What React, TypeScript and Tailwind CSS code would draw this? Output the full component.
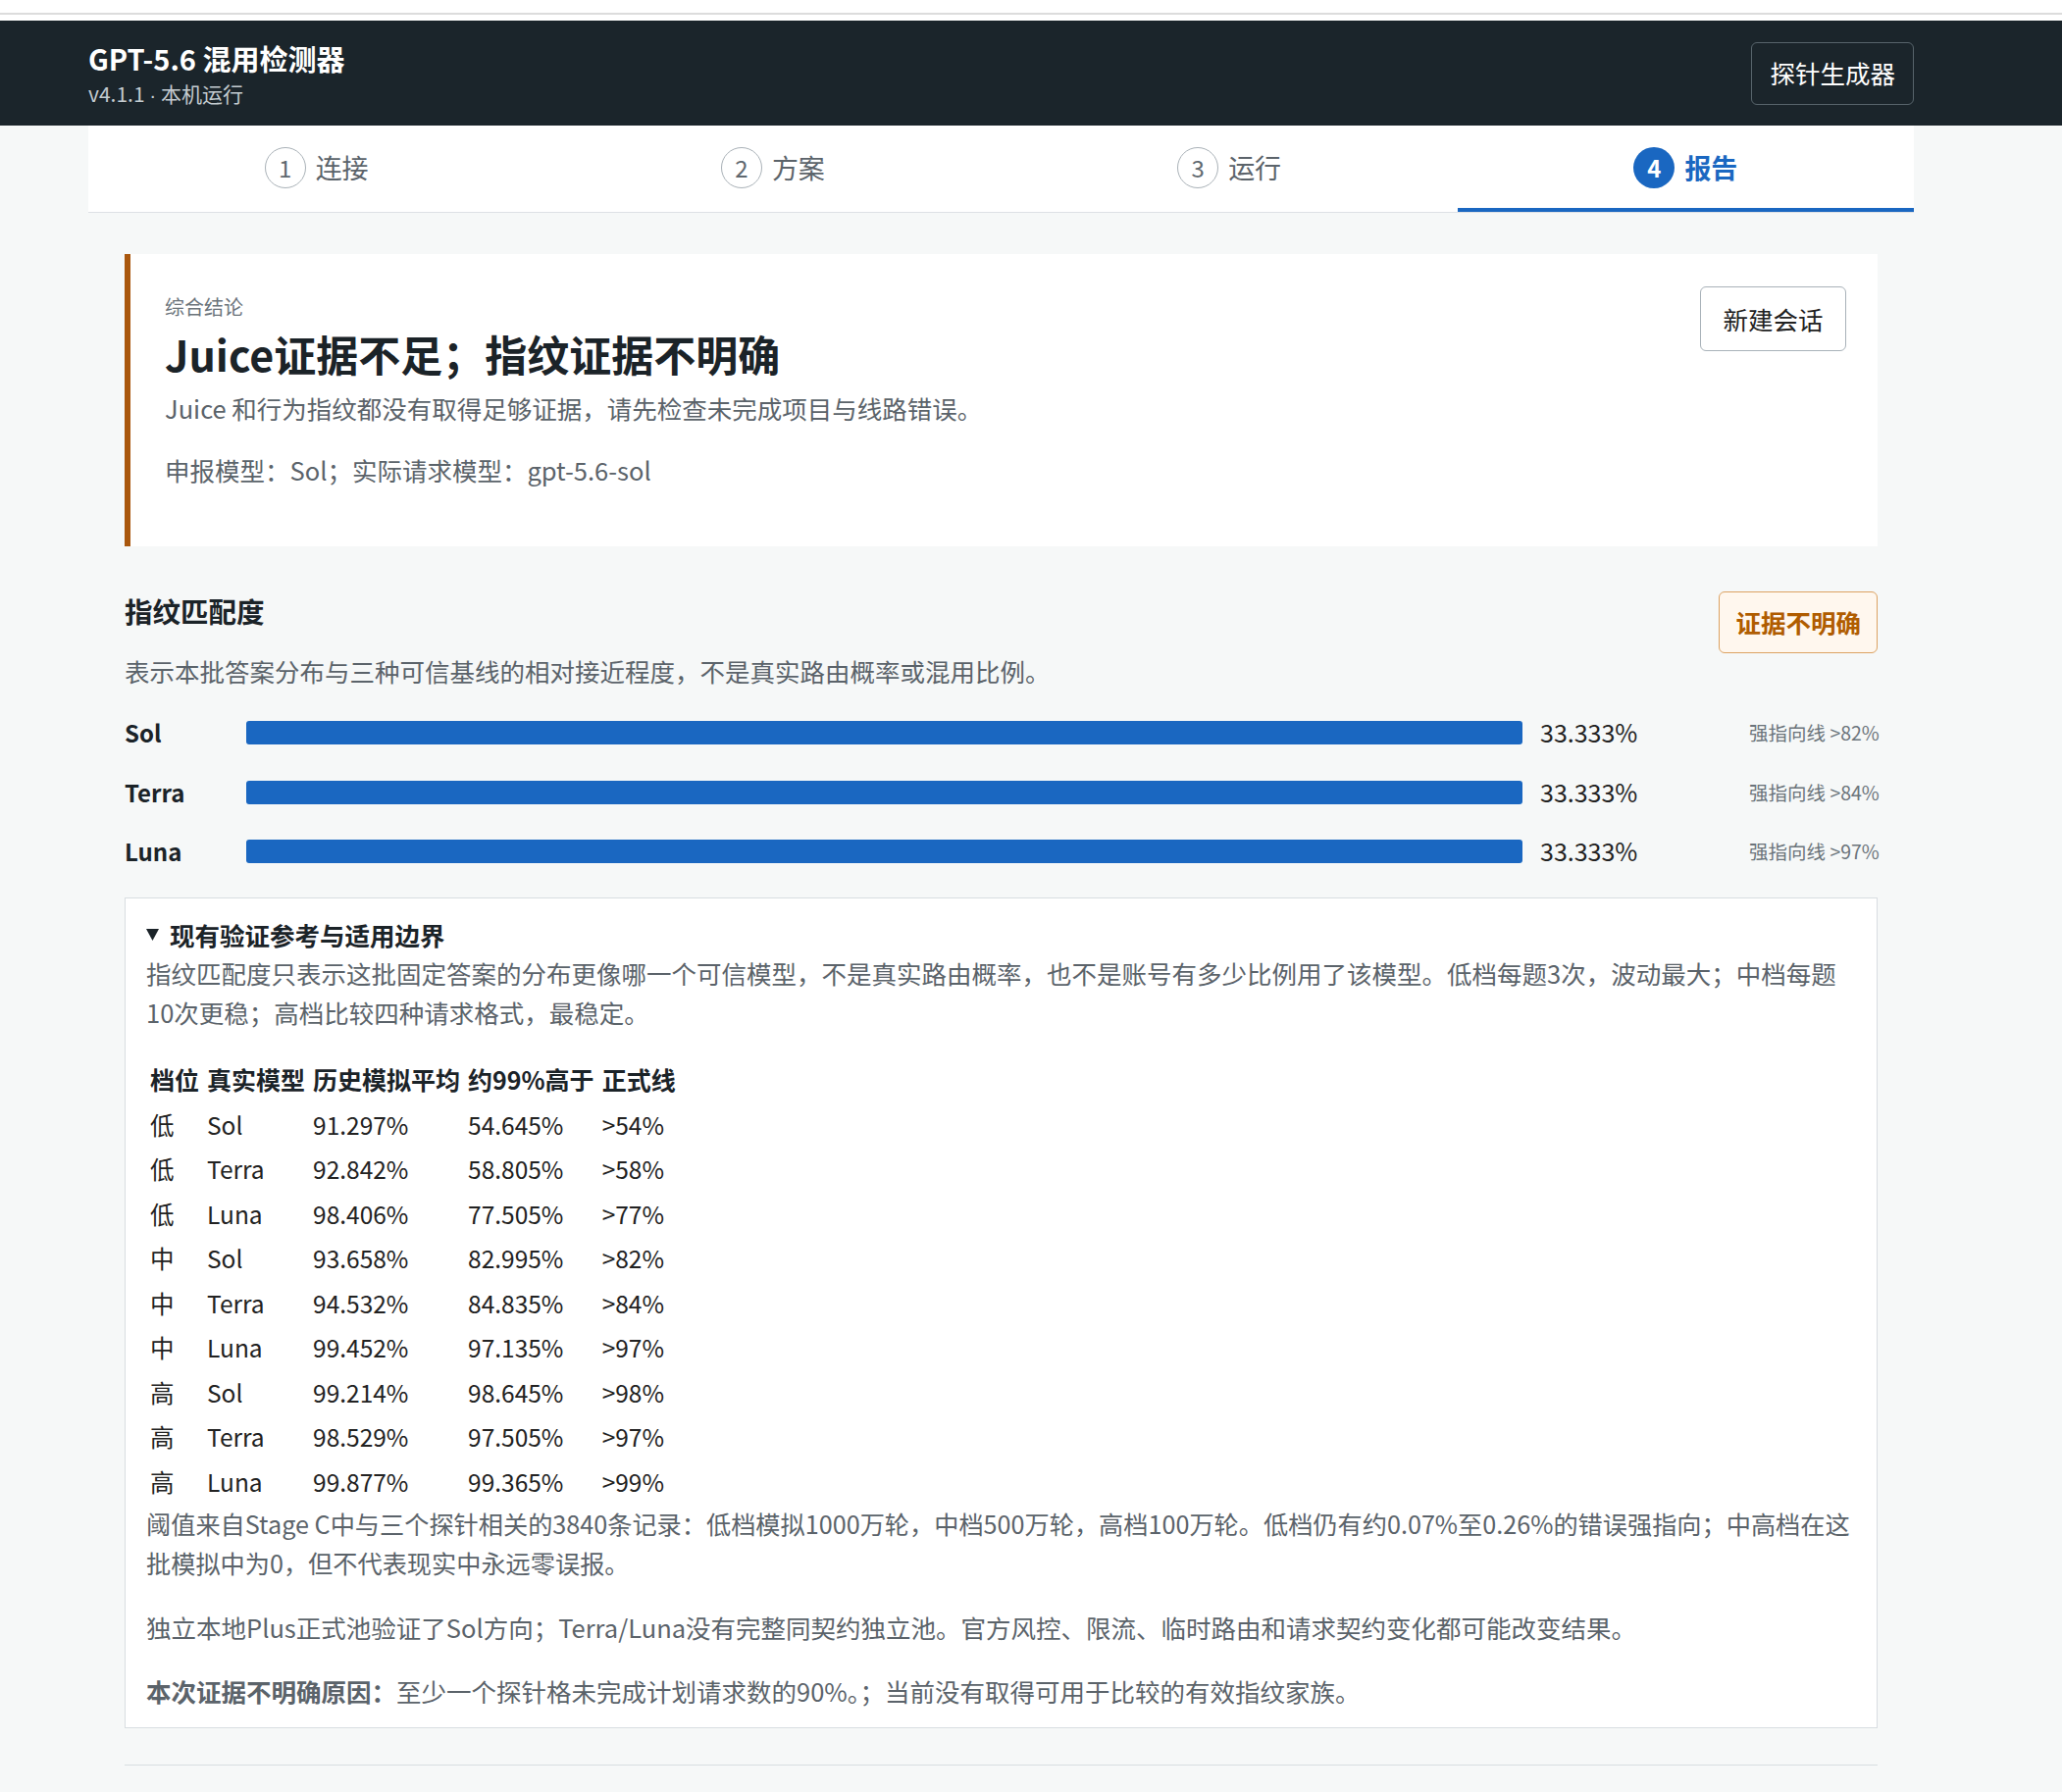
import React from 'react';

const steps = [
  { n: 1, label: '连接' },
  { n: 2, label: '方案' },
  { n: 3, label: '运行' },
  { n: 4, label: '报告' },
];

const matches = [
  { name: 'Sol', pct: 33.333, line: '>82%' },
  { name: 'Terra', pct: 33.333, line: '>84%' },
  { name: 'Luna', pct: 33.333, line: '>97%' },
];

const rows = [
  ['低', 'Sol', '91.297%', '54.645%', '>54%'],
  ['低', 'Terra', '92.842%', '58.805%', '>58%'],
  ['低', 'Luna', '98.406%', '77.505%', '>77%'],
  ['中', 'Sol', '93.658%', '82.995%', '>82%'],
  ['中', 'Terra', '94.532%', '84.835%', '>84%'],
  ['中', 'Luna', '99.452%', '97.135%', '>97%'],
  ['高', 'Sol', '99.214%', '98.645%', '>98%'],
  ['高', 'Terra', '98.529%', '97.505%', '>97%'],
  ['高', 'Luna', '99.877%', '99.365%', '>99%'],
];

const StepTabs: React.FC<{ active: number }> = ({ active }) => (
  <div className="grid grid-cols-4 bg-white border-b border-[#dde1e5]">
    {steps.map((s) => {
      const on = s.n === active;
      return (
        <div key={s.n} className="flex flex-col h-[88px]">
          <div className="flex flex-1 items-center justify-center gap-[10px] pt-[2px]">
            {on ? (
              <span className="flex h-[42px] w-[42px] items-center justify-center rounded-full bg-[#1a67c1] text-[24px] font-bold text-white">
                {s.n}
              </span>
            ) : (
              <span className="flex h-[42px] w-[42px] items-center justify-center rounded-full border border-[#aab2b8] text-[24px] text-[#5f686f]">
                {s.n}
              </span>
            )}
            <span className={on ? 'text-[27px] font-bold text-[#1a67c1]' : 'text-[27px] text-[#5b636a]'}>{s.label}</span>
          </div>
          <div className={on ? 'h-[4px] bg-[#1a67c1]' : 'h-[4px]'} />
        </div>
      );
    })}
  </div>
);

export default function App() {
  return (
    <div className="min-h-[1827px] bg-[#f6f8f8] font-['Noto_Sans_CJK_SC','Noto_Sans',sans-serif] text-[#1b2328]">
      {/* browser strip */}
      <div className="h-[15px] bg-white border-b-2 border-[#dcdcdc]" />
      <div className="h-[6px] bg-white" />

      <header className="h-[107px] bg-[#1b252b]">
        <div className="ml-[90px] flex h-full w-[1861px] items-center justify-between">
          <div className="flex flex-col pt-[3px]">
            <h1 className="text-[29px] font-bold leading-[40px] text-white">GPT-5.6 混用检测器</h1>
            <div className="text-[21px] leading-[32px] text-[#c3cbd0]">
              v4.1.1 <span className="font-['Liberation_Sans',sans-serif]">·</span> 本机运行
            </div>
          </div>
          <button className="h-[64px] rounded-[6px] border border-[#57646b] px-[18px] text-[25.5px] text-white">
            探针生成器
          </button>
        </div>
      </header>

      <div className="ml-[90px] w-[1861px]">
        <StepTabs active={4} />

        <main className="px-[37px] pt-[42px]">
          {/* overall verdict */}
          <section className="flex justify-between border-l-[6px] border-[#a9570d] bg-white pb-[60px] pl-[35px] pr-[32px] pt-[33px]">
            <div className="flex flex-col pt-[7px]">
              <div className="text-[20px] leading-[27px] text-[#6b747b]">综合结论</div>
              <h2 className="mt-[8px] text-[43px] font-bold leading-[52px] text-[#1b2328]">Juice证据不足；指纹证据不明确</h2>
              <p className="mt-[12px] text-[25.5px] leading-[36px] text-[#5b636a]">
                Juice 和行为指纹都没有取得足够证据，请先检查未完成项目与线路错误。
              </p>
              <p className="mt-[27px] text-[25.5px] leading-[36px] text-[#5b636a]">申报模型：Sol；实际请求模型：gpt-5.6-sol</p>
            </div>
            <button className="h-[66px] w-[149px] shrink-0 rounded-[6px] border border-[#a9b2b9] bg-white text-[25.5px] text-[#222]">
              新建会话
            </button>
          </section>

          {/* fingerprint match */}
          <section className="mt-[46px]">
            <div className="flex items-start justify-between">
              <h3 className="text-[28.5px] font-bold leading-[40px]">指纹匹配度</h3>
              <span className="flex h-[63px] items-center rounded-[6px] border border-[#dca262] bg-[#fff7ee] px-[16px] text-[25.5px] font-bold text-[#b05c00]">
                证据不明确
              </span>
            </div>
            <p className="text-[25.5px] leading-[36px] text-[#5b636a]">
              表示本批答案分布与三种可信基线的相对接近程度，不是真实路由概率或混用比例。
            </p>

            <div className="mt-[27px] flex flex-col gap-[24.5px]">
              {matches.map((m) => (
                <div key={m.name} className="flex h-[36px] items-center gap-[18px]">
                  <span className="w-[106px] text-[24px] font-bold text-[#1b2328]">{m.name}</span>
                  <div className="h-[24px] flex-1">
                    <div className="h-full rounded-[3px] bg-[#1a67c1]" style={{ width: `${Math.min(100, (m.pct / 33.333) * 100)}%` }} />
                  </div>
                  <span className="w-[195px] text-[25px] text-[#222]">{m.pct.toFixed(3)}%</span>
                  <span className="w-[131px] whitespace-nowrap text-right text-[19.5px] text-[#6b747b]">强指向线 {m.line}</span>
                </div>
              ))}
            </div>

            <details open className="mt-[29px] border border-[#d8dde1] bg-white px-[21px] pb-[17px] pt-[18px]">
              <summary className="flex list-none items-center text-[25.5px] font-bold leading-[38px] text-[#1b2328] [&::-webkit-details-marker]:hidden">
                <svg width="13" height="12" viewBox="0 0 13 12" className="mr-[11px]">
                  <path d="M0 0 H13 L6.5 12 Z" fill="#1b2328" />
                </svg>
                现有验证参考与适用边界
              </summary>
              <p className="mb-[26px] text-[25.5px] leading-[40px] text-[#5b636a]">
                指纹匹配度只表示这批固定答案的分布更像哪一个可信模型，不是真实路由概率，也不是账号有多少比例用了该模型。低档每题3次，波动最大；中档每题10次更稳；高档比较四种请求格式，最稳定。
              </p>

              <table className="text-[24.5px] text-[#222]">
                <thead>
                  <tr>
                    {['档位', '真实模型', '历史模拟平均', '约99%高于', '正式线'].map((h) => (
                      <th key={h} className="px-[4px] py-[5px] text-left text-[25px] font-bold leading-[35.5px] text-[#1b2328]">
                        {h}
                      </th>
                    ))}
                  </tr>
                </thead>
                <tbody>
                  {rows.map((r, i) => (
                    <tr key={i}>
                      {r.map((c, j) => (
                        <td key={j} className="px-[4px] py-[5px] leading-[35.5px]">
                          {c}
                        </td>
                      ))}
                    </tr>
                  ))}
                </tbody>
              </table>

              <p className="mb-[26px] text-[25.2px] leading-[40px] text-[#5b636a]">
                阈值来自Stage C中与三个探针相关的3840条记录：低档模拟1000万轮，中档500万轮，高档100万轮。低档仍有约0.07%至0.26%的错误强指向；中高档在这批模拟中为0，但不代表现实中永远零误报。
              </p>
              <p className="mb-[25px] text-[25.5px] leading-[40px] text-[#5b636a]">
                独立本地Plus正式池验证了Sol方向；Terra/Luna没有完整同契约独立池。官方风控、限流、临时路由和请求契约变化都可能改变结果。
              </p>
              <p className="text-[25.5px] leading-[40px] text-[#5b636a]">
                <strong className="font-bold">本次证据不明确原因：</strong>至少一个探针格未完成计划请求数的90%。；当前没有取得可用于比较的有效指纹家族。
              </p>
            </details>
          </section>

          <div className="mt-[37px] h-[80px] border-t border-[#d8dde1]" />
        </main>
      </div>
    </div>
  );
}
